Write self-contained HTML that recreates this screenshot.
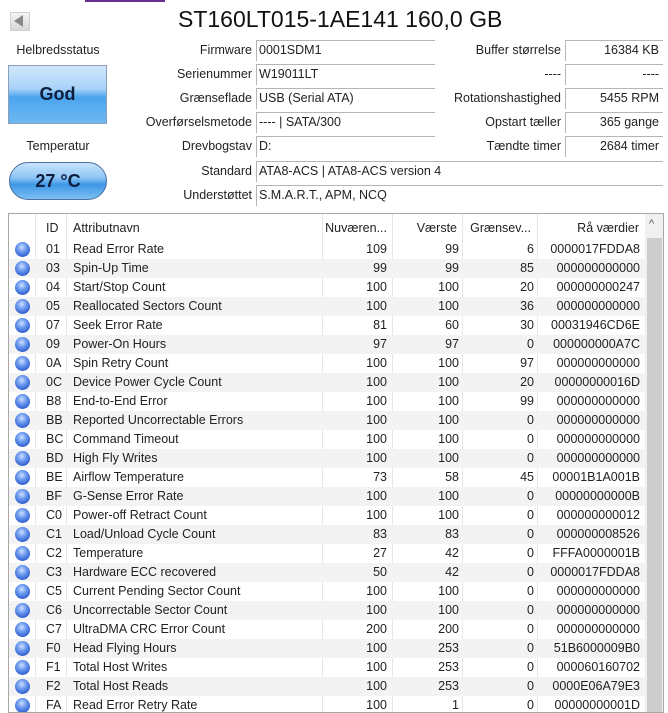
<!DOCTYPE html>
<html><head><meta charset="utf-8"><style>
*{margin:0;padding:0;box-sizing:border-box}
body{width:668px;height:703px;overflow:hidden;background:#fff;font-family:"Liberation Sans",sans-serif;font-size:12.5px;color:#222;position:relative}
.a{position:absolute;white-space:nowrap}
.lbl{position:absolute;text-align:right;white-space:nowrap;font-size:12.5px}
.val{position:absolute;height:21px;border-top:1px solid #b5b5b5;border-left:1px solid #b5b5b5;padding:2px 0 0 2px;font-size:12.5px;white-space:nowrap}
.r{text-align:right;padding-right:4px}
#tbl{position:absolute;left:8px;top:213px;width:656px;height:500px;border:1px solid #a8a8a8;overflow:hidden}
.row{position:absolute;left:0;width:636px;height:19px;font-size:12.5px}
.row span{position:absolute;top:2px;white-space:nowrap}
.vl{position:absolute;top:0;width:1px;height:500px;background:#e6e6e6}
.dot{position:absolute;left:6px;top:2px;width:15px;height:15px;border-radius:50%;background:radial-gradient(circle at 45% 35%,#cfe0ff 0,#6f9cf0 35%,#2f5fd0 75%,#27449a 100%)}
</style></head><body>
<div class="a" style="left:85px;top:0;width:80px;height:2px;background:#6a2e8e"></div>
<div class="a" style="left:10px;top:12px;width:20px;height:19px;background:linear-gradient(#f4f4f4,#d8d8d8);border:1px solid #d0d0d0"></div>
<div class="a" style="left:14px;top:15px;width:0;height:0;border-top:6px solid transparent;border-bottom:6px solid transparent;border-right:9px solid #888"></div>
<div class="a" style="left:178px;width:316px;top:6px;text-align:center;font-size:23px;color:#111">ST160LT015-1AE141 160,0 GB</div>

<div class="a" style="left:8px;width:100px;top:43px;text-align:center">Helbredsstatus</div>
<div class="a" style="left:8px;top:65px;width:99px;height:59px;border:1px solid #8a9fb8;background:linear-gradient(#cfe7fb 0,#a9d2f7 40%,#4aa4ee 55%,#6fb8f2 100%);text-align:center;line-height:57px;font-weight:bold;font-size:18px;color:#0e1e3e">God</div>
<div class="a" style="left:8px;width:100px;top:139px;text-align:center">Temperatur</div>
<div class="a" style="left:9px;top:162px;width:98px;height:38px;border-radius:19px;border:1px solid #4a6fa0;background:linear-gradient(#c8e4fb 0,#8ec6f5 40%,#3e97e6 60%,#7cc0f3 100%);text-align:center;line-height:36px;font-weight:bold;font-size:18px;color:#0e1e3e">27 °C</div>

<div class="lbl" style="right:416px;top:43px">Firmware</div>
<div class="lbl" style="right:416px;top:67px">Serienummer</div>
<div class="lbl" style="right:416px;top:91px">Grænseflade</div>
<div class="lbl" style="right:416px;top:115px">Overførselsmetode</div>
<div class="lbl" style="right:416px;top:139px">Drevbogstav</div>
<div class="lbl" style="right:416px;top:164px">Standard</div>
<div class="lbl" style="right:416px;top:188px">Understøttet</div>
<div class="val" style="left:256px;width:179px;top:40px">0001SDM1</div>
<div class="val" style="left:256px;width:179px;top:64px">W19011LT</div>
<div class="val" style="left:256px;width:179px;top:88px">USB (Serial ATA)</div>
<div class="val" style="left:256px;width:179px;top:112px">---- | SATA/300</div>
<div class="val" style="left:256px;width:179px;top:136px">D:</div>
<div class="val" style="left:256px;width:407px;top:161px">ATA8-ACS | ATA8-ACS version 4</div>
<div class="val" style="left:256px;width:407px;top:185px">S.M.A.R.T., APM, NCQ</div>

<div class="lbl" style="right:107px;top:43px">Buffer størrelse</div>
<div class="lbl" style="right:107px;top:67px">----</div>
<div class="lbl" style="right:107px;top:91px">Rotationshastighed</div>
<div class="lbl" style="right:107px;top:115px">Opstart tæller</div>
<div class="lbl" style="right:107px;top:139px">Tændte timer</div>
<div class="val r" style="left:565px;width:98px;top:40px">16384 KB</div>
<div class="val r" style="left:565px;width:98px;top:64px">----</div>
<div class="val r" style="left:565px;width:98px;top:88px">5455 RPM</div>
<div class="val r" style="left:565px;width:98px;top:112px">365 gange</div>
<div class="val r" style="left:565px;width:98px;top:136px">2684 timer</div>

<div id="tbl">
<div class="vl" style="left:26px"></div><div class="vl" style="left:57px"></div><div class="vl" style="left:313px"></div><div class="vl" style="left:383px"></div><div class="vl" style="left:453px"></div><div class="vl" style="left:528px"></div>
<div class="row" style="top:5px"><span style="left:37px">ID</span><span style="left:64px">Attributnavn</span><span style="right:258px">Nuværen...</span><span style="right:188px">Værste</span><span style="right:114px">Grænsev...</span><span style="right:6px">Rå værdier</span></div>
<div id="rows"></div>
<div class="a" style="left:636px;top:0;width:19px;height:500px;background:#f0f0f0"></div>
<div class="a" style="left:638px;top:24px;width:15px;height:480px;background:#cdcdcd"></div>
<div class="a" style="left:640px;top:4px;font-size:11px;color:#555">^</div>
</div>
<script>
var d=[["01","Read Error Rate",109,99,6,"0000017FDDA8"],["03","Spin-Up Time",99,99,85,"000000000000"],["04","Start/Stop Count",100,100,20,"000000000247"],["05","Reallocated Sectors Count",100,100,36,"000000000000"],["07","Seek Error Rate",81,60,30,"00031946CD6E"],["09","Power-On Hours",97,97,0,"000000000A7C"],["0A","Spin Retry Count",100,100,97,"000000000000"],["0C","Device Power Cycle Count",100,100,20,"00000000016D"],["B8","End-to-End Error",100,100,99,"000000000000"],["BB","Reported Uncorrectable Errors",100,100,0,"000000000000"],["BC","Command Timeout",100,100,0,"000000000000"],["BD","High Fly Writes",100,100,0,"000000000000"],["BE","Airflow Temperature",73,58,45,"00001B1A001B"],["BF","G-Sense Error Rate",100,100,0,"00000000000B"],["C0","Power-off Retract Count",100,100,0,"000000000012"],["C1","Load/Unload Cycle Count",83,83,0,"000000008526"],["C2","Temperature",27,42,0,"FFFA0000001B"],["C3","Hardware ECC recovered",50,42,0,"0000017FDDA8"],["C5","Current Pending Sector Count",100,100,0,"000000000000"],["C6","Uncorrectable Sector Count",100,100,0,"000000000000"],["C7","UltraDMA CRC Error Count",200,200,0,"000000000000"],["F0","Head Flying Hours",100,253,0,"51B6000009B0"],["F1","Total Host Writes",100,253,0,"000060160702"],["F2","Total Host Reads",100,253,0,"0000E06A79E3"],["FA","Read Error Retry Rate",100,1,0,"00000000001D"]];
var h="";d.forEach(function(r,i){h+='<div class="row" style="top:'+(26+19*i)+'px;background:'+(i%2?'#f3f3f3':'transparent')+'"><div class="dot"></div><span style="left:37px">'+r[0]+'</span><span style="left:64px">'+r[1]+'</span><span style="right:258px">'+r[2]+'</span><span style="right:186px">'+r[3]+'</span><span style="right:111px">'+r[4]+'</span><span style="right:5px">'+r[5]+'</span></div>'});
document.getElementById("rows").outerHTML=h;
</script>
</body></html>
